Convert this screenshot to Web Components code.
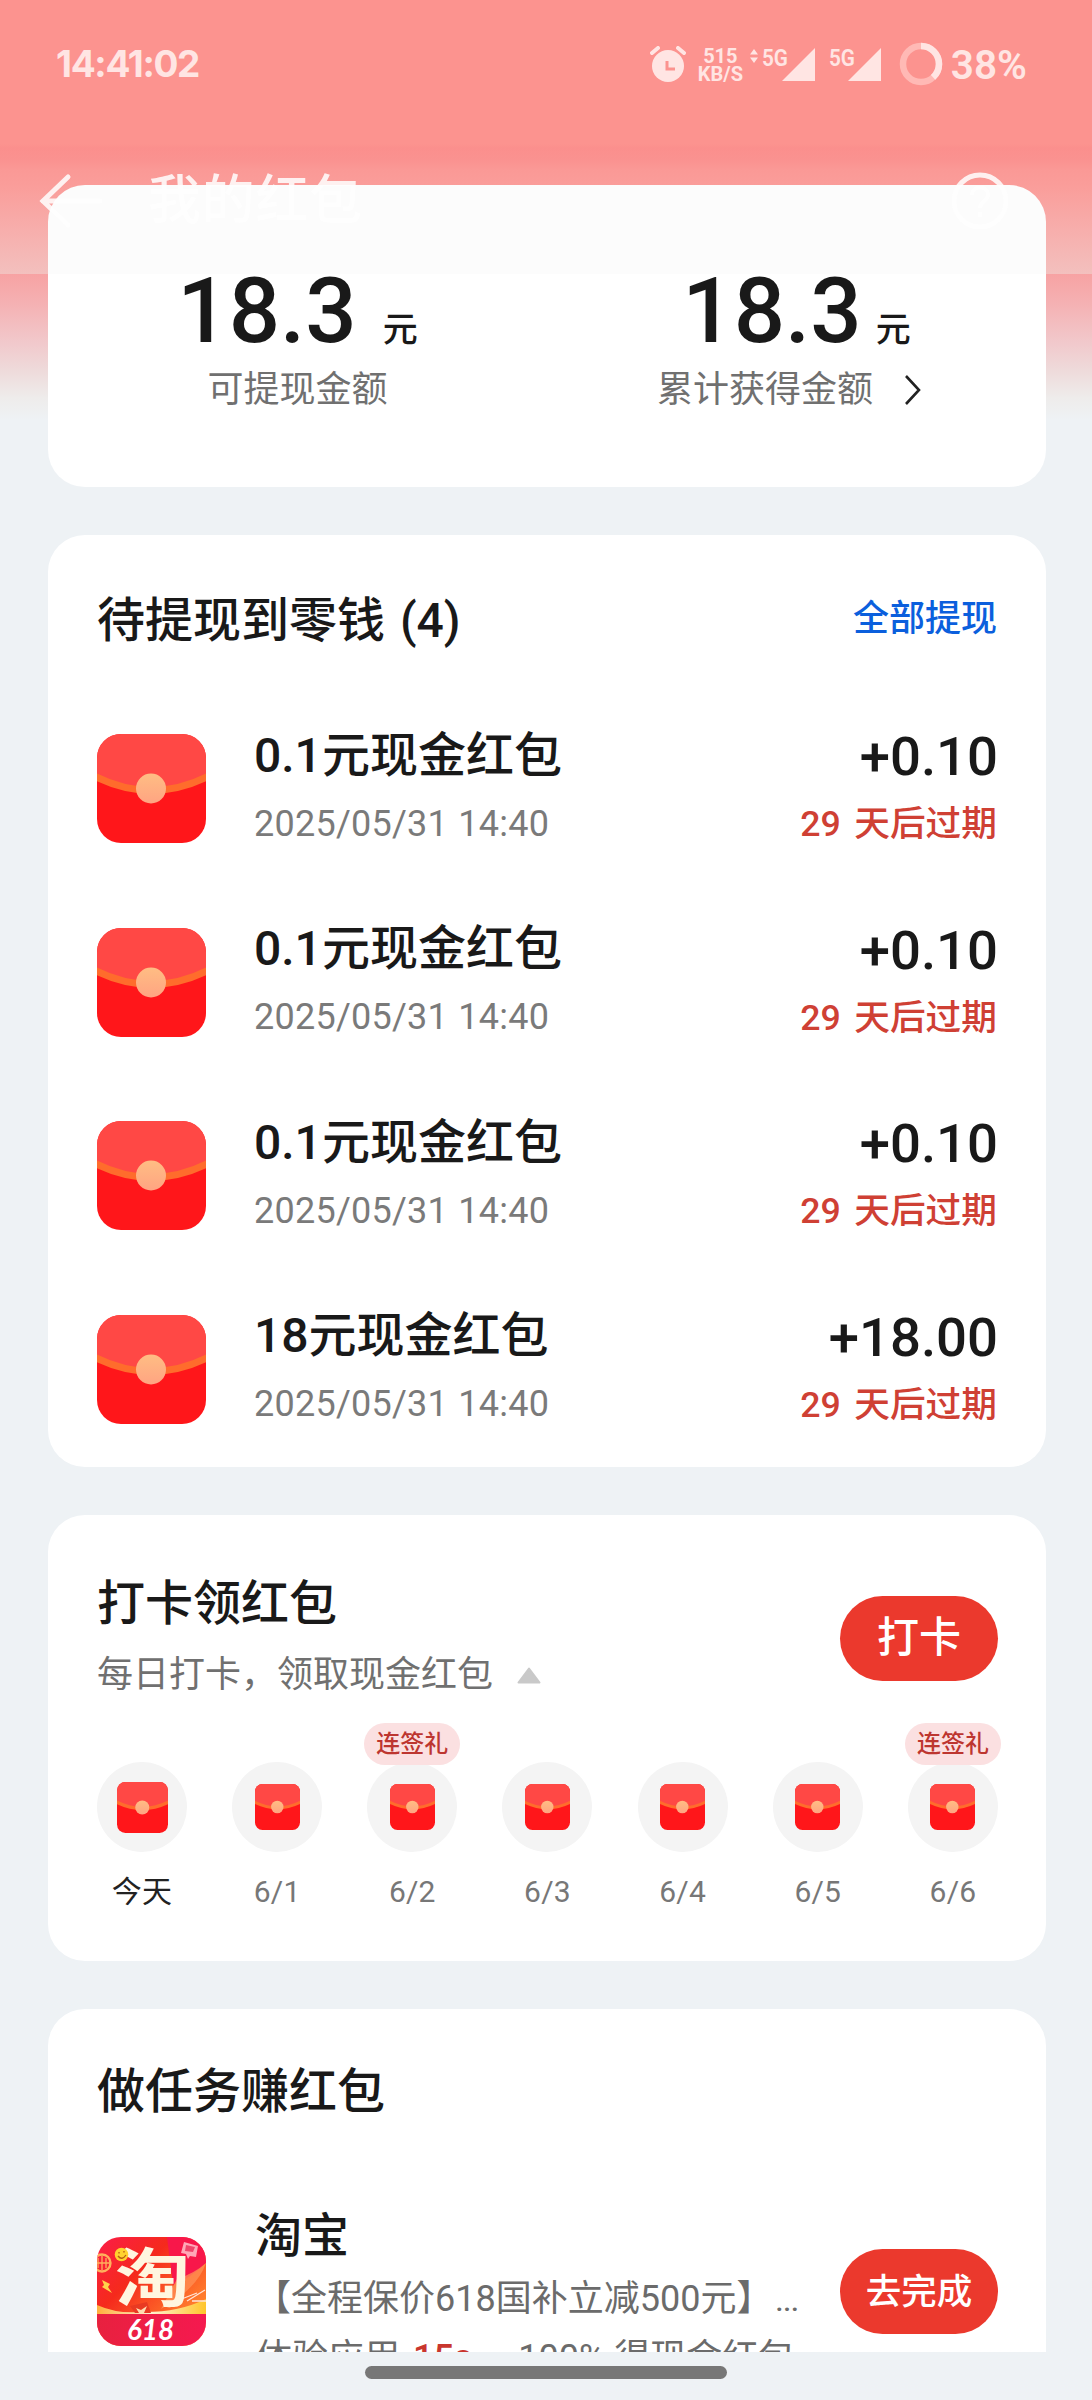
<!DOCTYPE html>
<html lang="zh-CN">
<head>
<meta charset="utf-8">
<title>我的红包</title>
<style>
html,body{margin:0;padding:0}
body{width:1092px;height:2400px;overflow:hidden;background:#eef2f5;font-family:Roboto,"Noto Sans CJK SC",sans-serif;color:#191919}
</style>
</head>
<body>
<red-packet-page></red-packet-page>
<script>
const define = (name, html, setup) => {
  const tpl = document.createElement('template');
  tpl.innerHTML = html;
  customElements.define(name, class extends HTMLElement {
    connectedCallback() {
      if (this.shadowRoot) return;
      const root = this.attachShadow({ mode: 'open' });
      root.append(tpl.content.cloneNode(true));
      if (setup) setup(this, root);
    }
  });
};

define('envelope-icon', `
<style>:host{display:block;width:109px;height:109px;flex:none}svg{display:block;width:100%;height:100%}</style>
<svg viewBox="0 0 109 109" preserveAspectRatio="none">
  <defs><clipPath id="c"><rect id="r" width="109" height="109" rx="24"/></clipPath>
  <linearGradient id="g" x1="0" y1="0" x2="0" y2="1"><stop offset="0" stop-color="#ffbd83"/><stop offset="1" stop-color="#ffa482"/></linearGradient></defs>
  <g clip-path="url(#c)"><rect width="109" height="109" fill="#ff161a"/>
  <path d="M0 0H109V42Q82 55.500 54.500 55.500T0 42Z" fill="#ff4845"/>
  <path d="M-2 42.500Q26 56.500 54.500 56.500T111 42.500" fill="none" stroke="#ff6c2c" stroke-width="7"/></g>
  <circle cx="54" cy="54.500" r="15" fill="url(#g)"/>
</svg>`, (host, root) => {
  if (host.hasAttribute('small')) root.getElementById('r').setAttribute('rx', 18);
});

define('status-bar', `
<style>
:host{display:flex;justify-content:space-between;height:127px;box-sizing:border-box;padding:0 65px 0 56px;align-items:center;color:#ffe5e3;font-weight:600}
.time{font:700 37px/44px Inter,Roboto;letter-spacing:-1.3px}
.right{display:flex;align-items:center}
.speed{font:700 20px/18px Roboto;display:flex;flex-direction:column;align-items:center;width:45px;margin-left:12px;padding-top:3px}
.speed span{height:18px}
svg{display:block}
.pct{font:600 40.500px/44px Roboto;margin-left:8px;padding-top:3px}
text{font:600 23px Roboto;fill:#ffe5e3}
</style>
<span class="time">14:41:02</span>
<div class="right">
<svg width="36" height="36" viewBox="0 0 36 36"><circle cx="18" cy="20" r="16" fill="#ffe5e3"/><path d="M2 7L8 2M28 2L34 7" stroke="#ffe5e3" stroke-width="4" stroke-linecap="round"/><path d="M17 15V23H25" fill="none" stroke="#fc938f" stroke-width="3"/></svg>
<div class="speed"><span>515</span><span>KB/S</span></div>
<svg width="132" height="36" viewBox="0 0 132 36" style="margin-left:6px">
<path d="M5 3L9 8.500H1ZM5 17L9 11.500H1Z" fill="#ffe5e3"/><text x="13" y="20" textLength="26" lengthAdjust="spacingAndGlyphs">5G</text><path d="M33 35L66 2V35Z" fill="#ffe5e3"/>
<text x="80" y="20" textLength="26" lengthAdjust="spacingAndGlyphs">5G</text><path d="M99 35L132 2V35Z" fill="#ffe5e3"/></svg>
<svg width="44" height="44" viewBox="0 0 44 44" style="margin-left:18px"><circle cx="22" cy="22" r="18" fill="none" stroke="#ffb9b5" stroke-width="6.500"/><circle cx="22" cy="22" r="18" fill="none" stroke="#ffe5e3" stroke-width="6.500" stroke-dasharray="43 80" transform="rotate(-90 22 22)"/></svg>
<span class="pct">38%</span>
</div>`);

define('app-header', `
<style>
:host{position:absolute;z-index:2;left:0;top:0;width:1092px;height:274px;display:flex;flex-direction:column;color:#fff}
.bar{height:147px;display:flex;align-items:center;padding:0 83px 0 38px}
h1{margin:0 auto 0 44px;font-size:53px;line-height:60px;font-weight:500;opacity:.86;letter-spacing:.7px}
svg{display:block;opacity:.86}
</style>
<status-bar></status-bar>
<div class="bar">
<svg width="66" height="60" viewBox="0 0 66 60" fill="none" stroke="#fff" stroke-width="5" stroke-linecap="round"><path d="M30 6L5 30L30 54M5 30H62"/></svg>
<h1>我的红包</h1>
<svg width="58" height="58" viewBox="0 0 58 58" fill="none" stroke="#fff" stroke-width="5"><circle cx="29" cy="29" r="26"/><path d="M21 23C21 13 37 13 37 23C37 29 29 29 29 36M29 40V45" stroke-width="4"/></svg>
</div>`);

define('surface-card', `
<style>:host{display:block;box-sizing:border-box;background:#fff;border-radius:37px;padding:0 48px 0 49px;overflow:hidden}</style><slot></slot>`);

define('amount-block', `
<style>
:host{flex:1;display:flex;flex-direction:column;align-items:center}
.n{display:flex;align-items:baseline;height:92px;line-height:92px}
.n b{font-size:90.500px;font-weight:500}
.n i{font-style:normal;font-size:35px;font-weight:500;margin-left:var(--unit-gap,26px)}
.l{display:flex;align-items:center;font-size:36px;line-height:40px;margin-top:13px;color:#707070;font-weight:400}
</style>
<div class="n"><b><slot></slot></b><i>元</i></div><div class="l"><slot name="label"></slot></div>`);

define('packet-row', `
<style>
:host{display:flex;align-items:center;height:109px}
.c{display:flex;flex-direction:column}
.m{margin-left:48px;padding-bottom:6px;gap:20px;margin-right:auto}
.t{font-size:48px;line-height:56px;font-weight:500}
.d{font-size:36px;line-height:40px;color:#7a7a7a;letter-spacing:.25px;word-spacing:1px}
.e{align-items:flex-end;gap:20px;padding-bottom:5px}
.a{font-size:54.500px;line-height:56px;font-weight:500}
.x{font-size:35.700px;line-height:40px;color:#cf4034;font-weight:500;word-spacing:4.500px;padding-right:1px}
</style>
<envelope-icon></envelope-icon>
<div class="c m"><span class="t"><slot></slot></span><span class="d">2025/05/31 14:40</span></div>
<div class="c e"><span class="a"></span><span class="x">29 天后过期</span></div>`,
(host, root) => { root.querySelector('.a').textContent = host.getAttribute('amount'); });

define('pill-button', `
<style>:host{display:flex;flex:none;align-items:center;justify-content:center;width:158px;height:85px;border-radius:43px;background:#eb392d;color:#fff;font-weight:500;font-size:var(--size,42px);line-height:50px}</style><slot></slot>`);

define('check-day', `
<style>
:host{position:relative;width:90px;display:flex;flex-direction:column;align-items:center;color:#777}
:host([today]){color:#222}
.o{width:90px;height:90px;border-radius:50%;background:#f4f4f4;display:flex;align-items:center;justify-content:center}
envelope-icon{width:45px;height:46px}
:host([today]) envelope-icon{width:51px;height:51px}
.l{font-size:30px;line-height:36px;margin-top:22px;white-space:nowrap;letter-spacing:.2px}
.b{position:absolute;top:-39px;left:50%;transform:translateX(-50%);width:96px;height:42px;border-radius:21px;background:#fbe0e1;color:#bd3630;font-size:24px;line-height:42px;font-weight:500;text-align:center}
</style>
<div class="o"><envelope-icon small></envelope-icon></div><span class="l"><slot></slot></span>`,
(host, root) => {
  if (host.hasAttribute('bonus')) {
    const b = document.createElement('span');
    b.className = 'b'; b.textContent = '连签礼';
    root.append(b);
  }
});

define('taobao-icon', `
<style>:host{display:block;flex:none;width:109px;height:109px}svg{display:block}</style>
<svg width="109" height="109" viewBox="0 0 109 109">
<defs><clipPath id="k"><rect width="109" height="109" rx="24"/></clipPath>
<linearGradient id="a" x1="0" y1="0" x2="1" y2="1"><stop offset="0" stop-color="#fb1d48"/><stop offset=".35" stop-color="#f52a1c"/><stop offset=".75" stop-color="#ff7a2c"/><stop offset="1" stop-color="#ff9a3a"/></linearGradient>
<linearGradient id="b" x1="0" y1="0" x2="1" y2="0"><stop offset="0" stop-color="#e8213f"/><stop offset="1" stop-color="#f5194f"/></linearGradient>
<linearGradient id="y" x1="0" y1="0" x2="1" y2="0"><stop offset="0" stop-color="#ffb03c"/><stop offset=".5" stop-color="#fff2cf"/><stop offset="1" stop-color="#ffc52a"/></linearGradient></defs>
<g clip-path="url(#k)">
<rect width="109" height="109" fill="url(#a)"/>
<path d="M109 0V26Q92 42 76 48L70 0Z" fill="#f8174a"/>
<path d="M109 26Q100 52 64 72L80 42Q98 36 109 26Z" fill="#ff9156" opacity=".75"/>
<path d="M0 68Q20 77 44 75Q80 76 109 62V82H0Z" fill="url(#y)"/>
<path d="M82 63L100 56M90 64L108 53M95 64H109" stroke="#ffe4d6" stroke-width="1.300"/>
<rect y="77" width="109" height="32" fill="url(#b)"/>
<circle cx="5" cy="26" r="8.500" fill="none" stroke="#ffb05c" stroke-width="2.400"/><path d="M1 21V31M5 19V33M9 21V31M-2 26H13" stroke="#ffb05c" stroke-width="1.300"/>
<path d="M5 43L13 47L11 50L15 56L5 50L7 48Z" fill="#ffd44a"/>
<path d="M87 5L101 9L99 20L93 19L91 22L89 17L84 16Z" fill="#ffa8b7"/><path d="M89 8L98 10L96 15L88 14Z" fill="#f0456b"/>
<text x="18" y="64" font-family="Noto Sans CJK SC" font-weight="700" font-size="64" fill="#fff6df" textLength="75" lengthAdjust="spacingAndGlyphs">淘</text>
<circle cx="24.500" cy="17.500" r="6.800" fill="#ffd22e"/><path d="M21 19Q25 24 29 18M22 15V16.500M27 14V15.500" stroke="#b65a10" stroke-width="1.300" fill="none"/>
<path d="M33 69L50 65L54 76H38Z" fill="#e93a22"/><path d="M39 71L44 73L50 69L47 76H42Z" fill="#ffdcb0"/>
<text x="30" y="103" font-family="Lato" font-style="italic" font-weight="700" font-size="28" fill="#fff" textLength="47" lengthAdjust="spacingAndGlyphs">618</text>
</g></svg>`);

define('task-row', `
<style>
:host{display:flex;height:146px;align-items:flex-start}
taobao-icon{margin-top:28px}
.m{margin-left:49px;display:flex;flex-direction:column;width:545px;white-space:nowrap}
.t{font-size:47px;line-height:56px;font-weight:500;margin-top:-1px}
.s{font-size:36px;line-height:40px;color:#6b6b6b;margin-top:15px}
.s+.s{margin-top:16px;padding-left:1px}
em{font-style:normal;color:#c9362e;font-weight:500;margin:0 1px 0 4px}
i{font-style:normal;font-size:28px;font-weight:500;margin-left:3px}
pill-button{margin:40px 0 0 auto;--size:35.500px}
</style>
<taobao-icon></taobao-icon>
<div class="m"><span class="t">淘宝</span><span class="s">【全程保价618国补立减500元】<i>...</i></span><span class="s">体验应用 <em>15s</em> ，100% 得现金红包</span></div>
<pill-button>去完成</pill-button>`);

define('red-packet-page', `
<style>
:host{display:block;position:relative;width:1092px;height:2400px;background:linear-gradient(180deg,#fc938f 0,#fc938f 144px,#fb8f8d 148px,#fa9290 160px,#fa9996 170px,#fa9d9a 186px,#f7aeac 230px,#f3c0be 274px,#f7a2a3 274px,#f5b0b2 302px,#f1cacd 345px,#eedada 370px,#eeeceb 398px,#eef2f5 420px)}
main{box-sizing:border-box;height:2352px;overflow:hidden;padding:185px 46px 0 48px;display:flex;flex-direction:column;gap:48px}
surface-card{flex:none}
.sum{height:302px;padding:80px 0 0;display:flex;background:linear-gradient(#fcfcfc 89px,#fff 89px)}
.pend{height:932px;padding-top:56px}
.head{display:flex;align-items:center;justify-content:space-between;height:60px}
h2{margin:0;font-size:48px;line-height:60px;font-weight:500}
.head h2{word-spacing:3px}
.link{font-size:36px;line-height:40px;font-weight:500;color:#0b5fdd;padding:0 1px 4px 0}
.rows{display:flex;flex-direction:column;gap:84.500px;margin-top:83px}
.check{height:446px;padding-top:59px}
.ch{display:flex;justify-content:space-between;align-items:center;height:130px}
.ch pill-button{margin-bottom:2px}
.sub{display:flex;align-items:center;font-size:36px;line-height:40px;color:#707070;margin:21px 0 9px}
.sub svg{margin-left:24px;margin-top:1px}
.days{display:flex;justify-content:space-between;margin-top:58px}
.task{height:400px;padding-top:53px}
.task task-row{margin-top:87px}
.nav{height:48px;display:flex;justify-content:center;align-items:flex-start;padding-top:14px;box-sizing:border-box}
.nav i{width:362px;height:13px;border-radius:7px;background:#777}
</style>
<app-header></app-header>
<main>
<surface-card class="sum">
<amount-block>18.3<span slot="label">可提现金额</span></amount-block>
<amount-block style="--unit-gap:14px">18.3<span slot="label">累计获得金额</span><svg slot="label" width="16" height="30" viewBox="0 0 16 30" fill="none" stroke="#222" stroke-width="2.600" style="margin:0 15px 0 32px"><path d="M1 1L14 15L1 29"/></svg></amount-block>
</surface-card>
<surface-card class="pend">
<div class="head"><h2>待提现到零钱 (4)</h2><span class="link">全部提现</span></div>
<div class="rows">
<packet-row amount="+0.10">0.1元现金红包</packet-row>
<packet-row amount="+0.10">0.1元现金红包</packet-row>
<packet-row amount="+0.10">0.1元现金红包</packet-row>
<packet-row amount="+18.00">18元现金红包</packet-row>
</div>
</surface-card>
<surface-card class="check">
<div class="ch"><div><h2>打卡领红包</h2><div class="sub">每日打卡，领取现金红包<svg width="24" height="17" viewBox="0 0 24 17"><path d="M12 1.500L22.500 15.500H1.500Z" fill="#c9c9c9" stroke="#c9c9c9" stroke-width="2" stroke-linejoin="round"/></svg></div></div><pill-button>打卡</pill-button></div>
<div class="days"><check-day today>今天</check-day><check-day>6/1</check-day><check-day bonus>6/2</check-day><check-day>6/3</check-day><check-day>6/4</check-day><check-day>6/5</check-day><check-day bonus>6/6</check-day></div>
</surface-card>
<surface-card class="task"><h2>做任务赚红包</h2><task-row></task-row></surface-card>
</main>
<div class="nav"><i></i></div>`);
</script>
</body>
</html>
